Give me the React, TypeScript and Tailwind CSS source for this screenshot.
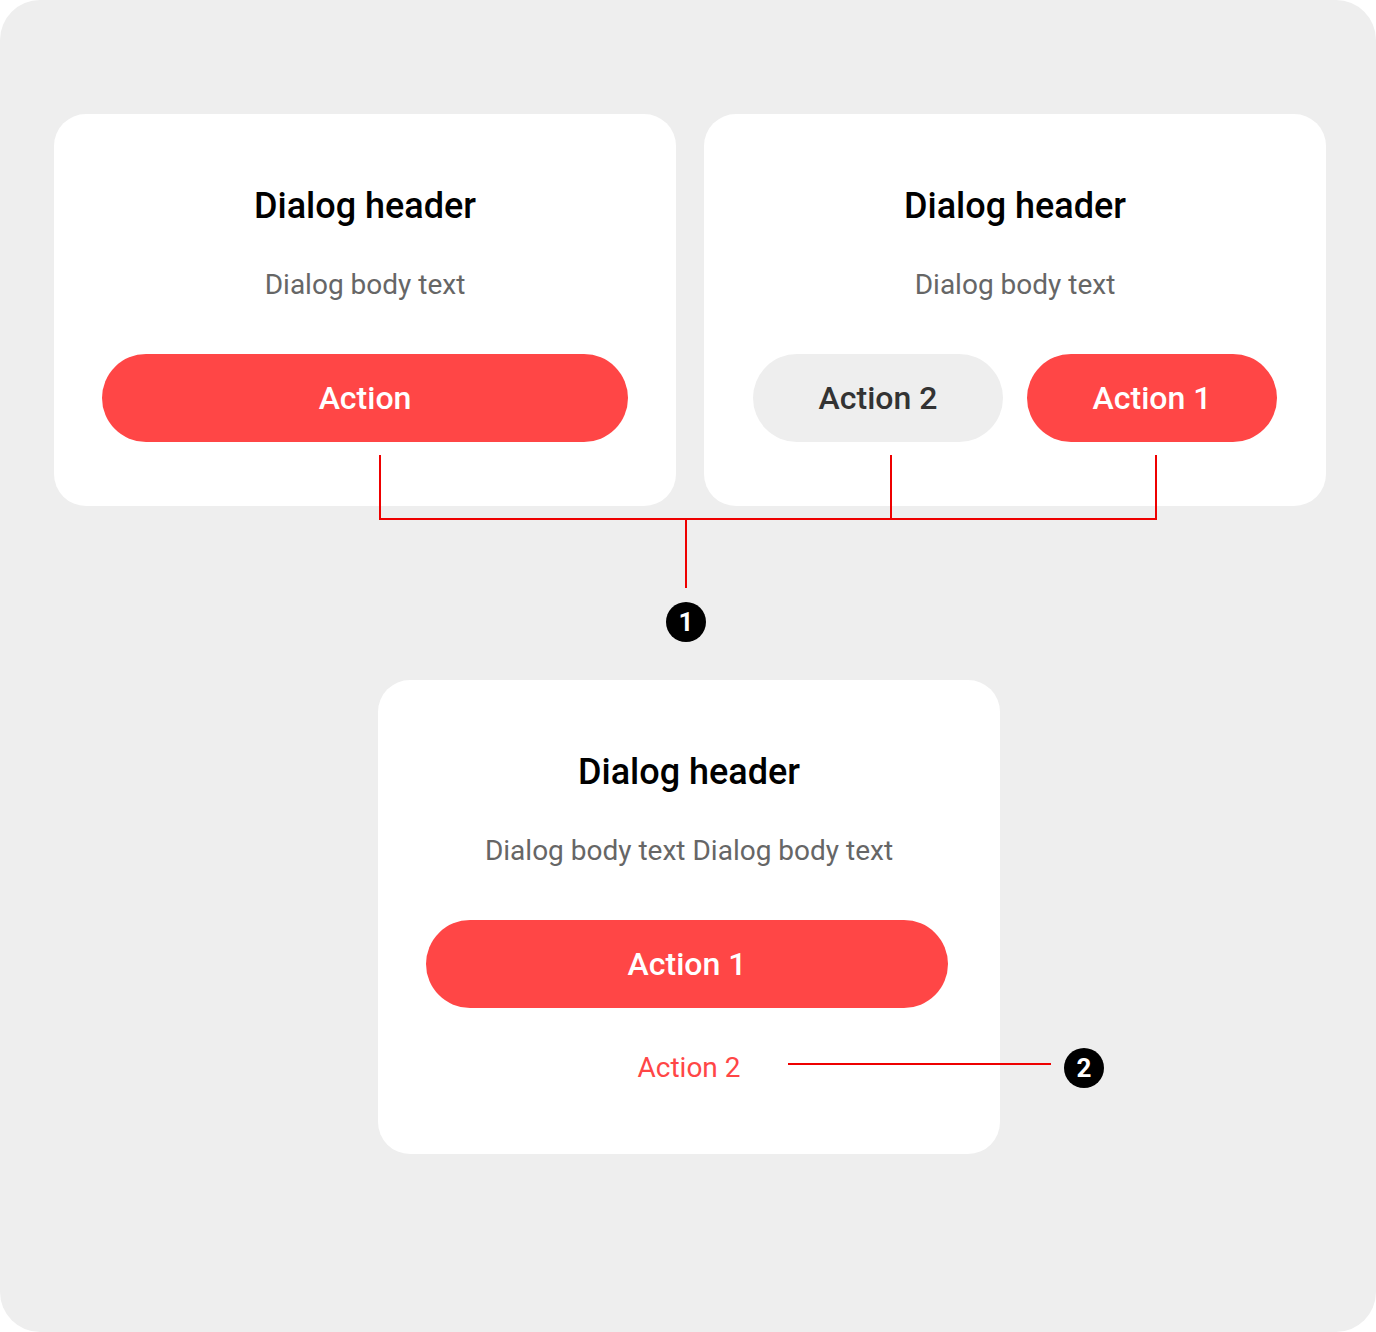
const font = { fontFamily: "Roboto, 'Noto Sans', sans-serif" };

const Header = () => (
  <h2 className="text-[36px] leading-[40px] font-medium text-black text-center">
    Dialog header
  </h2>
);

const Body = ({ text }: { text: string }) => (
  <p className="mt-[43px] text-[28px] leading-[32px] text-[#666666] text-center">{text}</p>
);

const Badge = ({ n, className }: { n: number; className: string }) => (
  <div
    className={`absolute w-10 h-10 rounded-full bg-black text-white flex items-center justify-center text-[26px] font-bold leading-none ${className}`}
  >
    {n}
  </div>
);

export default function App() {
  return (
    <div className="bg-white w-[1376px] h-[1332px]" style={font}>
      <div className="relative w-full h-full rounded-[40px] bg-[#eeeeee] pt-[114px] pl-[54px] flex flex-col items-start">
        <div className="flex gap-[28px]">
          <div className="w-[622px] h-[392px] bg-white rounded-[32px] pt-[72px] px-12">
            <Header />
            <Body text="Dialog body text" />
            <button className="mt-[53px] w-full h-[88px] rounded-full bg-[#ff4646] text-white text-[32px] font-medium">
              Action
            </button>
          </div>
          <div className="w-[622px] h-[392px] bg-white rounded-[32px] pt-[72px] px-[49px]">
            <Header />
            <Body text="Dialog body text" />
            <div className="mt-[53px] flex gap-6">
              <button className="flex-1 h-[88px] rounded-full bg-[#eeeeee] text-[#333333] text-[32px] font-medium">
                Action 2
              </button>
              <button className="flex-1 h-[88px] rounded-full bg-[#ff4646] text-white text-[32px] font-medium">
                Action 1
              </button>
            </div>
          </div>
        </div>

        <div className="mt-[174px] ml-[324px] w-[622px] bg-white rounded-[32px] pt-[72px] px-12 pb-[70px]">
          <Header />
          <Body text="Dialog body text Dialog body text" />
          <button className="mt-[53px] w-[522px] h-[88px] rounded-full bg-[#ff4646] text-white text-[32px] font-medium">
            Action 1
          </button>
          <p className="mt-[44px] text-[28px] leading-[32px] text-[#ff4646] text-center">Action 2</p>
        </div>

        {/* annotations */}
        <div className="absolute left-[379px] top-[455px] w-[2px] h-[65px] bg-[#ee0000]" />
        <div className="absolute left-[890px] top-[455px] w-[2px] h-[65px] bg-[#ee0000]" />
        <div className="absolute left-[1155px] top-[455px] w-[2px] h-[65px] bg-[#ee0000]" />
        <div className="absolute left-[379px] top-[518px] w-[778px] h-[2px] bg-[#ee0000]" />
        <div className="absolute left-[685px] top-[518px] w-[2px] h-[70px] bg-[#ee0000]" />
        <Badge n={1} className="left-[666px] top-[602px]" />
        <div className="absolute left-[788px] top-[1063px] w-[263px] h-[2px] bg-[#ee0000]" />
        <Badge n={2} className="left-[1064px] top-[1048px]" />
      </div>
    </div>
  );
}
